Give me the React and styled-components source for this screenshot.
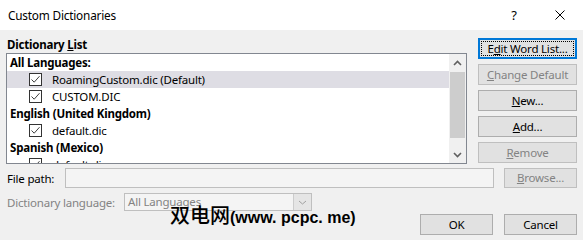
import React from "react";
import styled, { createGlobalStyle, css } from "styled-components";

const Global = createGlobalStyle`
  html, body { margin: 0; padding: 0; }
  body {
    width: 583px; height: 240px; overflow: hidden;
    background: #f0f0f0;
    font-family: "Noto Sans", "Liberation Sans", sans-serif;
    font-size: 11.5px; letter-spacing: -0.2px; color: #000;
  }
  * { box-sizing: border-box; }
`;

const Window = styled.div`
  width: 583px; height: 240px;
  display: flex; flex-direction: column;
  background: #f0f0f0;
`;

const TitleBar = styled.div`
  height: 30px; flex: none;
  background: #fff;
  display: flex; align-items: center;
  padding-left: 8px;
`;
const Title = styled.div`
  flex: 1;
  font-size: 11.8px;
  line-height: 16px;
`;
const TitleButton = styled.div`
  width: 46px; height: 30px;
  display: flex; align-items: center; justify-content: center;
  font-size: 13px;
`;

const Body = styled.div`
  position: relative;
  flex: 1;
  padding: 0 6px;
`;

const TopSection = styled.div`
  display: flex; align-items: flex-start;
`;
const ListColumn = styled.div`
  width: 461px;
  padding-top: 6px;
`;
const SectionLabel = styled.div`
  height: 17px; line-height: 17px;
  padding-left: 1px;
  font-weight: 700;
`;
const ListBox = styled.div`
  height: 111px;
  border: 1px solid #828790;
  background: #fff;
  display: flex;
  overflow: hidden;
`;
const ListItems = styled.div`
  flex: 1; overflow: hidden;
`;
const Row = styled.div`
  height: 17px; line-height: 17px;
  display: flex; align-items: center;
  white-space: nowrap;
  ${(p) => p.$group ? css`padding-left: 3px; font-weight: 700;` : css`padding-left: 22px; gap: 10px;`}
  background: ${(p) => (p.$selected ? "#dedde4" : "transparent")};
`;
const Check = styled.span`
  width: 13px; height: 13px; flex: none;
  border: 1px solid #333;
  background: #fff;
  display: flex; align-items: center; justify-content: center;
`;

const Scrollbar = styled.div`
  width: 17px; flex: none;
  background: #f0f0f0;
  display: flex; flex-direction: column;
`;
const ScrollArrow = styled.div`
  height: 17px; flex: none;
  display: flex; align-items: center; justify-content: center;
`;
const ScrollTrack = styled.div`
  flex: 1;
  padding: 1px 1px 0;
`;
const Thumb = styled.div`
  height: 66px;
  background: #cdcdcd;
`;

const ButtonColumn = styled.div`
  margin-left: 11px;
  padding-top: 8px;
  width: 99px;
  display: flex; flex-direction: column; gap: 5px;
`;

const Button = styled.div`
  width: ${(p) => p.$w || 99}px; height: ${(p) => p.$h || 21}px;
  background: #e1e1e1;
  border: 1px solid ${(p) => (p.$disabled ? "#bfbfbf" : "#adadad")};
  color: ${(p) => (p.$disabled ? "#838383" : "#000")};
  display: flex; align-items: center; justify-content: center;
  line-height: 16px;
  white-space: nowrap;
  position: relative;
  ${(p) => p.$focused && css`
    border: 2px solid #0078d7;
    &::after {
      content: ""; position: absolute; inset: 1px;
      border: 1px dotted #000;
    }
  `}
`;

const FieldRow = styled.div`
  margin-top: 4px;
  display: flex; align-items: center;
  height: 20px;
`;
const FieldLabel = styled.div`
  width: ${(p) => p.$w}px; flex: none;
  padding-left: 1px;
  color: ${(p) => (p.$disabled ? "#838383" : "#000")};
  white-space: nowrap;
`;
const TextBox = styled.div`
  width: 429px; height: 20px;
  border: 1px solid #bfbfbf;
  background: #f4f4f4;
  margin-right: 10px;
`;

const BottomRow = styled.div`
  display: flex; align-items: flex-start;
`;
const LanguageField = styled.div`
  margin-top: 5px;
  display: flex; align-items: center;
  height: 18px;
`;
const Combo = styled.div`
  width: 188px; height: 18px;
  border: 1px solid #bfbfbf;
  background: #f4f4f4;
  display: flex; align-items: center;
  color: #838383;
`;
const ComboText = styled.div`
  flex: 1; padding-left: 3px;
  line-height: 16px;
`;
const ComboArrow = styled.div`
  width: 18px; height: 16px;
  background: #e5e5e5;
  border-left: 1px solid #cccccc;
  display: flex; align-items: center; justify-content: center;
`;
const Actions = styled.div`
  margin-left: auto;
  margin-top: 26px;
  display: flex; gap: 11px;
`;

const Watermark = styled.div`
  position: absolute;
  left: 170px; top: 173px;
  font-family: "Noto Sans CJK SC", sans-serif;
  font-size: 20px; font-weight: 500;
  letter-spacing: 0;
  line-height: 24px;
  white-space: nowrap;
  color: #000;
`;
const WatermarkLatin = styled.span`
  font-family: "Liberation Sans", sans-serif;
  font-size: 16px;
  font-weight: 700;
  letter-spacing: 0;
`;

const Chevron = ({ up }) => (
  <svg width="9" height="6" viewBox="0 0 9 6">
    <path d={up ? "M1 5 L4.5 1.5 L8 5" : "M1 1 L4.5 4.5 L8 1"} fill="none" stroke="#606060" strokeWidth="1.6" />
  </svg>
);

const Tick = () => (
  <svg width="11" height="11" viewBox="0 0 11 11">
    <path d="M1.5 5.5 L4.2 8.2 L9.5 2.2" fill="none" stroke="#404040" strokeWidth="1" />
  </svg>
);

const rows = [
  { group: true, text: "All Languages:" },
  { text: "RoamingCustom.dic (Default)", selected: true },
  { text: "CUSTOM.DIC" },
  { group: true, text: "English (United Kingdom)" },
  { text: "default.dic" },
  { group: true, text: "Spanish (Mexico)" },
  { text: "default.dic" },
];

export default function App() {
  return (
    <Window>
      <Global />
      <TitleBar>
        <Title>Custom Dictionaries</Title>
        <TitleButton>?</TitleButton>
        <TitleButton>
          <svg width="10" height="10" viewBox="0 0 10 10">
            <path d="M0.5 0.5 L9.5 9.5 M9.5 0.5 L0.5 9.5" stroke="#000" strokeWidth="1" />
          </svg>
        </TitleButton>
      </TitleBar>
      <Body>
        <TopSection>
          <ListColumn>
            <SectionLabel>Dictionary <u>L</u>ist</SectionLabel>
            <ListBox>
              <ListItems>
                {rows.map((r, i) =>
                  r.group ? (
                    <Row key={i} $group>{r.text}</Row>
                  ) : (
                    <Row key={i} $selected={r.selected}>
                      <Check><Tick /></Check>
                      {r.text}
                    </Row>
                  )
                )}
              </ListItems>
              <Scrollbar>
                <ScrollArrow><Chevron up /></ScrollArrow>
                <ScrollTrack><Thumb /></ScrollTrack>
                <ScrollArrow><Chevron /></ScrollArrow>
              </Scrollbar>
            </ListBox>
          </ListColumn>
          <ButtonColumn>
            <Button $focused>E<u>d</u>it Word List...</Button>
            <Button $disabled><u>C</u>hange Default</Button>
            <Button><u>N</u>ew...</Button>
            <Button><u>A</u>dd...</Button>
            <Button $disabled><u>R</u>emove</Button>
          </ButtonColumn>
        </TopSection>
        <FieldRow>
          <FieldLabel $w={59}>File path:</FieldLabel>
          <TextBox />
          <Button $disabled $w={73} $h={20}><u>B</u>rowse...</Button>
        </FieldRow>
        <BottomRow>
          <LanguageField>
            <FieldLabel $w={118} $disabled>Dictionary language:</FieldLabel>
            <Combo>
              <ComboText>All Languages</ComboText>
              <ComboArrow>
                <svg width="9" height="5" viewBox="0 0 9 5">
                  <path d="M1 1 L4.5 4 L8 1" fill="none" stroke="#a0a0a0" strokeWidth="1" />
                </svg>
              </ComboArrow>
            </Combo>
          </LanguageField>
          <Actions>
            <Button $w={73}>OK</Button>
            <Button $w={73}>Cancel</Button>
          </Actions>
        </BottomRow>
        <Watermark>双电网<WatermarkLatin>(www. pcpc. me)</WatermarkLatin></Watermark>
      </Body>
    </Window>
  );
}
